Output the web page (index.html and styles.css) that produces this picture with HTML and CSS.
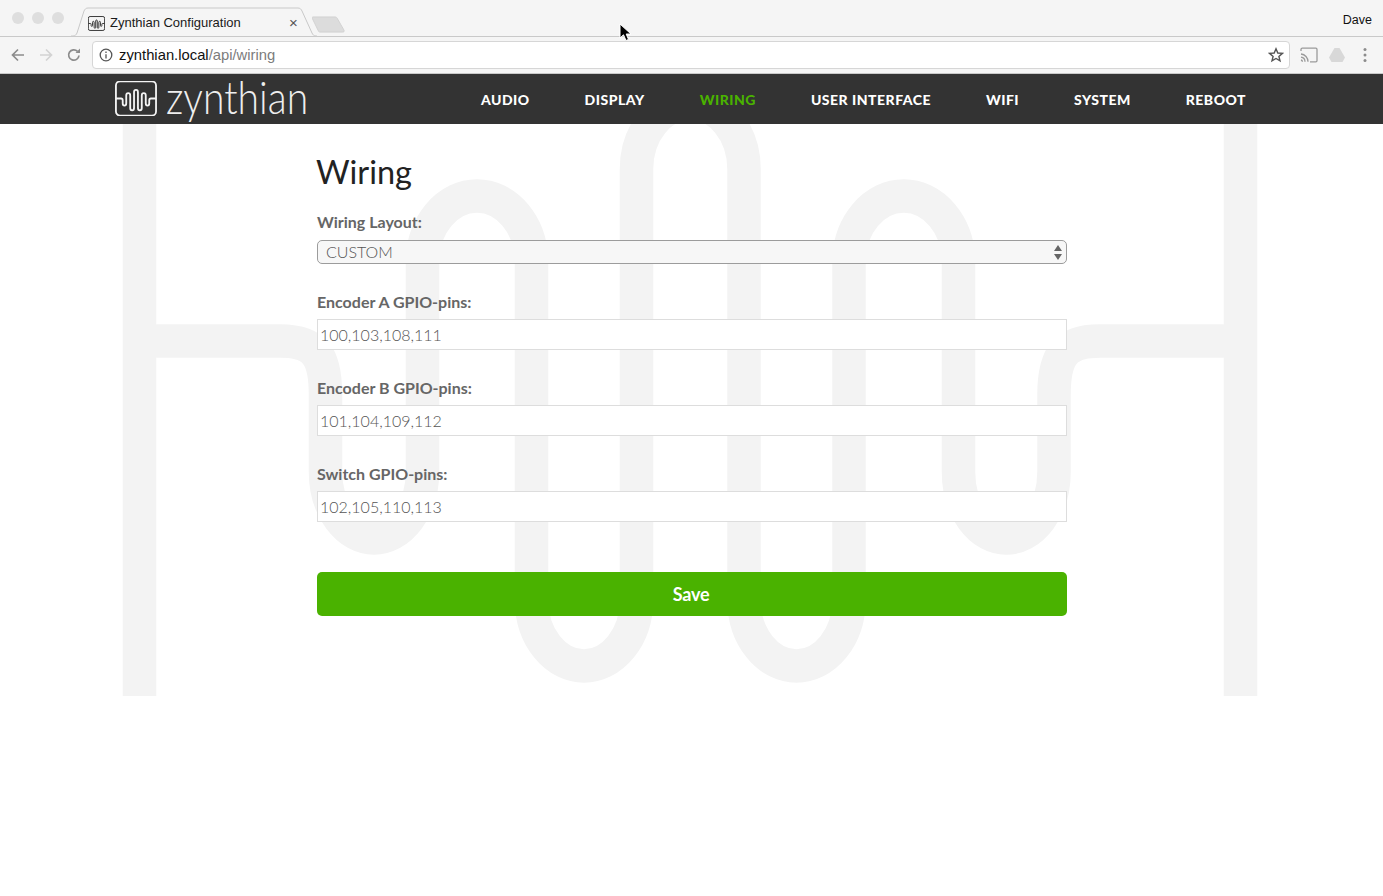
FILE: index.html
```html
<!DOCTYPE html>
<html lang="en">
<head>
<meta charset="utf-8">
<title>Zynthian Configuration</title>
<link rel="stylesheet" href="styles.css">
</head>
<body>
<header class="tabstrip">
  <div class="lights"><i></i><i></i><i></i></div>
  <div class="tab">
    <svg class="tab-shape" width="246" height="30" viewBox="0 0 246 30"><path d="M0 29H2C4 29 5 28 6 26L13 4C14 2 15 1 17 1H227C229 1 230 2 231 4L241 26C242 28 243 29 245 29H246" /></svg>
    <svg class="favicon" viewBox="115 -139 1151 961"><use href="#wave"/></svg>
    <span class="tab-title">Zynthian Configuration</span>
    <span class="tab-close">×</span>
  </div>
  <svg class="newtab" width="33" height="17" viewBox="0 0 33 18" preserveAspectRatio="none"><path d="M1 1H23C24 1 25 1.500 25.500 3L32 15C32.500 16.500 32 17 30 17H8C7 17 6.500 16.500 6 15L0.500 3C0 1.500 0 1 1 1Z"/></svg>
  <span class="user">Dave</span>
</header>
<div class="toolbar">
  <svg class="tool" viewBox="0 0 16 16"><path class="ic-g" d="M14 8H2.500M8 2.500 2.500 8 8 13.500"/></svg>
  <svg class="tool" viewBox="0 0 16 16"><path class="ic-l" d="M2 8H13.500M8 2.500 13.500 8 8 13.500"/></svg>
  <svg class="tool" viewBox="0 0 16 16"><path class="ic-g" d="M13 8.500A5.200 5.200 0 1 1 11.500 4.300"/><path class="ic-fill" d="M9.500 6H14V1.500Z"/></svg>
  <div class="omnibox">
    <svg class="info" viewBox="0 0 14 14"><circle cx="7" cy="7" r="5.800"/><path d="M7 6.200V10.500M7 3.500V5"/></svg>
    <span class="url">zynthian.local<span class="url-path">/api/wiring</span></span>
    <svg class="star" viewBox="0 0 16 16"><path d="M8 1.800 9.800 6 14.400 6.400 10.900 9.400 12 13.900 8 11.500 4 13.900 5.100 9.400 1.600 6.400 6.200 6Z"/></svg>
  </div>
  <svg class="ext cast" viewBox="0 0 18 16"><path d="M1 4V2.500C1 1.800 1.500 1.200 2.200 1.200H15.800C16.500 1.200 17 1.800 17 2.500V13.500C17 14.200 16.500 14.800 15.800 14.800H10M1 7A7.800 7.800 0 0 1 8 14.800M1 10.200A4.600 4.600 0 0 1 5 14.800M1 13A2 2 0 0 1 2.500 14.800"/></svg>
  <svg class="ext drive" viewBox="0 0 18 16"><path d="M6.500 1H11.500L17 10.500 14.500 15H3.500L1 10.500Z"/></svg>
  <svg class="ext dots" viewBox="0 0 6 16"><circle cx="3" cy="2.500" r="1.500"/><circle cx="3" cy="8" r="1.500"/><circle cx="3" cy="13.500" r="1.500"/></svg>
</div>
<nav class="nav">
  <a class="brand" href="#">
    <svg class="brand-icon" viewBox="115 -139 1151 961"><use href="#wave"/></svg>
    <span class="brand-name">zynthian</span>
  </a>
  <ul class="menu">
    <li>AUDIO</li>
    <li>DISPLAY</li>
    <li class="active">WIRING</li>
    <li>USER INTERFACE</li>
    <li>WIFI</li>
    <li>SYSTEM</li>
    <li>REBOOT</li>
  </ul>
</nav>
<main class="main">
  <svg class="watermark" width="1383" height="572" viewBox="0 124 1383 572" aria-hidden="true">
    <defs>
      <g id="wave">
        <rect x="139.500" y="-131" width="1101" height="944" rx="115"/>
        <path d="M139.500 341H280C315 341 325.500 355 325.500 395V472A48.500 66 0 0 0 422.500 472V262A54.500 66 0 0 1 531.500 262V600A52.500 66 0 0 0 636.500 600V169A53.750 66 0 0 1 744 169V600A52.500 66 0 0 0 849 600V262A54.750 66 0 0 1 958.500 262V472A47.750 66 0 0 0 1054 472V395C1054 355 1065 341 1100 341H1240.500"/>
      </g>
    </defs>
    <use href="#wave"/>
  </svg>
  <form class="form">
    <h1 class="title">Wiring</h1>
    <label class="label label-first" for="layout">Wiring Layout:</label>
    <div class="select-wrap">
      <select class="select" id="layout"><option>CUSTOM</option></select>
      <svg class="select-arrows" width="8" height="15" viewBox="0 0 8 15"><path d="M4 0 8 6H0ZM0 9H8L4 15Z"/></svg>
    </div>
    <label class="label" for="a">Encoder A GPIO-pins:</label>
    <input class="input" id="a" type="text" value="100,103,108,111">
    <label class="label" for="b">Encoder B GPIO-pins:</label>
    <input class="input" id="b" type="text" value="101,104,109,112">
    <label class="label" for="c">Switch GPIO-pins:</label>
    <input class="input" id="c" type="text" value="102,105,110,113">
    <button class="save" type="button">Save</button>
  </form>
</main>
<svg class="cursor" width="13" height="19" viewBox="0 0 13 19"><path d="M1 1V15L4.500 11.800 7 17.500 9.500 16.400 7.200 11H12Z"/></svg>
</body>
</html>
```
FILE: styles.css
```css
* { box-sizing: border-box; }
html, body { margin: 0; height: 100%; }
body {
  display: flex;
  flex-direction: column;
  height: 896px;
  overflow: hidden;
  background: #fff;
  font-family: "Lato", "Liberation Sans", sans-serif;
}

/* browser chrome */
.tabstrip {
  position: relative;
  display: flex;
  align-items: flex-start;
  height: 37px;
  flex: none;
  background: #f5f5f5;
  border-bottom: 1px solid #c9c9c9;
  font-family: "Liberation Sans", sans-serif;
}
.lights { display: flex; gap: 8px; padding: 12px 0 0 12px; }
.lights i { width: 12px; height: 12px; border-radius: 50%; background: #dedede; }
.tab {
  position: relative;
  display: flex;
  align-items: center;
  width: 246px;
  height: 30px;
  margin: 7px 0 0 7px;
  padding: 0 0 0 17px;
}
.tab-shape { position: absolute; left: 0; top: 0; }
.tab-shape path { fill: #f5f5f5; stroke: #c9c9c9; stroke-width: 1; }
.favicon { position: relative; width: 17px; height: 15px; margin-top: 2px; fill: none; stroke: #333; stroke-width: 65; flex: none; }
.tab-title { position: relative; margin-left: 5px; font-size: 13px; color: #1a1a1a; white-space: nowrap; }
.tab-close { position: absolute; left: 218px; top: 7px; font-size: 15px; line-height: 18px; color: #555; }
.newtab { margin: 16px 0 0 -5px; }
.newtab path { fill: #dcdcdc; stroke: #d2d2d2; }
.user { position: absolute; right: 11px; top: 13px; font-size: 12.5px; color: #111; }

.toolbar {
  display: flex;
  align-items: center;
  height: 37px;
  flex: none;
  padding: 0 15px 1px 10px;
  background: #f5f5f5;
  border-bottom: 1px solid #c9c9c9;
}
.tool { width: 16px; height: 16px; margin-right: 12px; flex: none; }
.ic-g { fill: none; stroke: #8c8c8c; stroke-width: 1.7; }
.ic-l { fill: none; stroke: #d2d2d2; stroke-width: 1.7; }
.ic-fill { fill: #8c8c8c; }
.omnibox {
  display: flex;
  align-items: center;
  flex: 1;
  height: 28px;
  margin-left: -2px;
  padding: 0 5px 0 6px;
  background: #fff;
  border: 1px solid #d6d6d6;
  border-radius: 4px;
  font-family: "Liberation Sans", sans-serif;
}
.info { width: 14px; height: 14px; fill: none; stroke: #555; stroke-width: 1.300; flex: none; }
.url { margin: 1px 0 0 6px; font-size: 14.8px; color: #111; }
.url-path { color: #7c7c7c; }
.star { margin-left: auto; width: 16px; height: 16px; fill: none; stroke: #555; stroke-width: 1.400; }
.ext { flex: none; margin-left: 10px; height: 16px; }
.cast { width: 18px; fill: none; stroke: #9a9a9a; stroke-width: 1.300; }
.drive { width: 18px; fill: #d8d8d8; }
.dots { width: 6px; fill: #8c8c8c; margin-left: 16px; }

/* site navigation */
.nav {
  display: flex;
  align-items: center;
  justify-content: space-between;
  height: 50px;
  flex: none;
  padding: 0 137px 0 115px;
  background: #333;
}
.brand { display: flex; align-items: center; color: #fff; text-decoration: none; }
.brand-icon { width: 42px; height: 35px; margin-top: -1px; fill: none; stroke: #f4f4f4; stroke-width: 50; }
.brand-name {
  display: block;
  width: 141px;
  margin: -5px 0 0 9px;
  font-size: 46px;
  font-weight: 300;
  line-height: 50px;
  color: #eee;
  transform: scaleX(.85);
  transform-origin: left center;
  white-space: nowrap;
}
.menu {
  display: flex;
  gap: 54.900px;
  margin: 0;
  padding: 0;
  list-style: none;
  font-size: 14px;
  font-weight: 900;
  letter-spacing: .5px;
  color: #fff;
}
.menu .active { color: #4ab200; }

/* page */
.main { position: relative; flex: 1; display: flex; justify-content: center; padding-left: 1px; }
.watermark { position: absolute; left: 0; top: 0; fill: none; stroke: #f3f3f3; stroke-width: 33.500; }
.form { position: relative; display: flex; flex-direction: column; width: 750px; }
.title {
  margin: 27px 0 0 -1px;
  font-size: 32.500px;
  font-weight: 400;
  line-height: 41px;
  color: #222;
}
.label {
  margin-top: 28px;
  font-size: 16px;
  font-weight: 700;
  line-height: 20px;
  color: #666;
}
.label-first { margin-top: 20px; }
.select-wrap { position: relative; margin-top: 8px; }
.select {
  display: block;
  width: 100%;
  height: 24px;
  padding: 0 0 2px 8px;
  appearance: none;
  font: 300 16px "Lato", sans-serif;
  color: #555;
  background: #f7f7f7;
  border: 1px solid #9c9c9c;
  border-radius: 5px;
}
.select-arrows { position: absolute; right: 5px; top: 5px; fill: #666; }
.input {
  display: block;
  width: 100%;
  height: 31px;
  margin-top: 7px;
  padding: 0 2px;
  font: 300 16px "Lato", sans-serif;
  color: #555;
  background: #fff;
  border: 1px solid #ddd;
}
.save {
  height: 44px;
  margin-top: 50px;
  padding: 0 2px 0 0;
  font: 700 18px "Lato", sans-serif;
  letter-spacing: -.2px;
  color: #fff;
  background: #4ab200;
  border: 0;
  border-radius: 5px;
}
.cursor { position: absolute; left: 619px; top: 23px; fill: #000; stroke: #fff; stroke-width: 1; }
```
